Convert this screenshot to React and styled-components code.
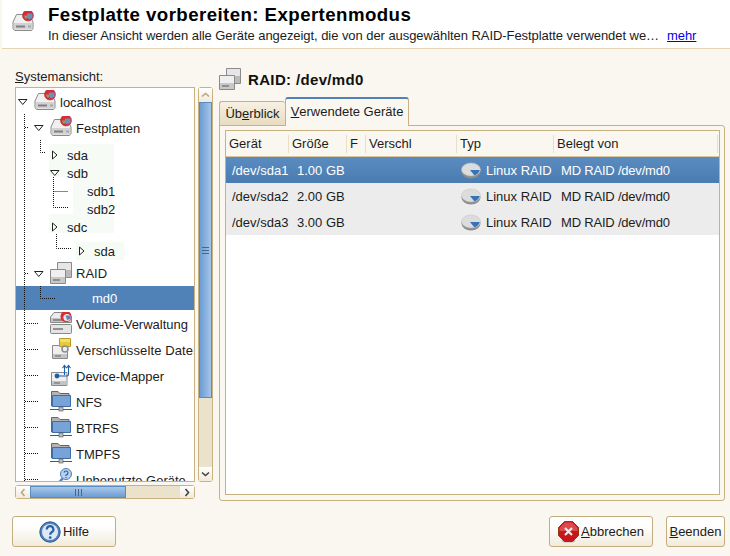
import React from 'react';
import styled, { createGlobalStyle } from 'styled-components';

const GlobalStyle = createGlobalStyle`
  html, body { margin: 0; padding: 0; background: #faf7f0; }
  body { font-family: "Liberation Sans", Arial, sans-serif; font-size: 13px; color: #1c1c1c; }
`;

const Page = styled.div`
  width: 730px;
  height: 556px;
  display: flex;
  flex-direction: column;
  overflow: hidden;
  background: #faf7f0;
`;

const Header = styled.header`
  height: 48px;
  padding-left: 10px;
  display: flex;
  align-items: center;
  gap: 14px;
  background: #fff;
  border-bottom: 1px solid #e6d5b3;
  margin-left: 2px;
`;

const HeaderIcon = styled.div`
  width: 22px;
  height: 22px;
  margin-top: -4px;
`;

const HeaderText = styled.div`
  display: flex;
  flex-direction: column;
  gap: 3px;
  margin-top: -1px;
`;

const Title = styled.h1`
  margin: 0;
  font-family: "Liberation Sans", Arial, sans-serif;
  font-size: 18.67px;
  line-height: 20px;
  letter-spacing: 0.43px;
  font-weight: 700;
  color: #000;
`;

const Subtitle = styled.div`
  display: flex;
  gap: 8px;
  font-size: 13px;
  line-height: 15px;
  letter-spacing: -0.06px;
  white-space: nowrap;
`;

const MoreLink = styled.a`
  color: #0000ee;
  text-decoration: underline;
`;

const Main = styled.main`
  height: 452px;
  padding: 19px 5px 0 15px;
  box-sizing: border-box;
  display: flex;
  gap: 6px;
`;

const LeftColumn = styled.section`
  width: 198px;
  display: flex;
  flex-direction: column;
`;

const TreeLabel = styled.div`
  height: 19px;
  line-height: 18px;
`;

const TreeArea = styled.div`
  height: 395px;
  display: flex;
  gap: 3px;
`;

const Tree = styled.div`
  position: relative;
  width: 180px;
  box-sizing: border-box;
  border: 1px solid #c8b183;
  background: #fff;
  padding-top: 1px;
  overflow: hidden;
`;

const Row = styled.div`
  height: ${p => p.$height || 26}px;
  margin-top: ${p => p.$top || 0}px;
  padding-left: ${p => p.$indent || 0}px;
  display: flex;
  align-items: center;
  white-space: nowrap;
  letter-spacing: ${p => p.$track || 0}px;
  background: ${p => (p.$selected ? '#5082b8' : 'transparent')};
  color: ${p => (p.$selected ? '#fff' : '#1c1c1c')};
`;

const ExpanderSlot = styled.span`
  width: ${p => p.$width || 16}px;
  flex: none;
  display: flex;
  align-items: center;
`;

const RowIcon = styled.span`
  width: 22px;
  height: 22px;
  flex: none;
  margin-right: 4px;
  margin-top: -2px;
`;

const PaleBlock = styled.div`
  width: ${p => p.$width}px;
  height: ${p => p.$height}px;
  margin-top: ${p => p.$top}px;
  margin-left: ${p => p.$left}px;
  padding-top: ${p => p.$pad || 0}px;
  box-sizing: border-box;
  background: #f6fbf6;
`;

const Leaves = styled.div`
  margin-top: -5px;
  padding-top: 5px;
  background: linear-gradient(#fff, #fff) no-repeat 0 0 / 24px 37px;
`;

const SubRow = styled.div`
  height: 18px;
  padding-left: ${p => p.$indent || 1}px;
  display: flex;
  align-items: center;
`;

const TreeLines = styled.svg`
  position: absolute;
  left: 0;
  top: 0;
  pointer-events: none;
`;

const VScroll = styled.div`
  width: 15px;
  box-sizing: border-box;
  border: 1px solid #c8b183;
  border-radius: 3px;
  background: #ebe2cc;
  display: flex;
  flex-direction: column;
  align-items: stretch;
`;

const HScroll = styled.div`
  width: 180px;
  height: 14px;
  margin-top: 3px;
  box-sizing: border-box;
  border: 1px solid #c8b183;
  border-radius: 3px;
  background: #ebe2cc;
  display: flex;
`;

const ScrollButton = styled.div`
  flex: none;
  display: flex;
  align-items: center;
  justify-content: center;
  width: ${p => (p.$horizontal ? '14px' : 'auto')};
  height: ${p => (p.$horizontal ? 'auto' : '14px')};
  background: linear-gradient(#fff, #f1ead9);
`;

const Thumb = styled.div`
  flex: none;
  display: flex;
  align-items: center;
  justify-content: center;
  box-sizing: border-box;
  border: 1px solid #5a8cc4;
  ${p => p.$horizontal
    ? 'width: 96px; background: linear-gradient(#a9c8e8, #6b9dd3);'
    : 'height: 296px; background: linear-gradient(90deg, #6a9cd3, #a6c6e8);'}
`;

const Spacer = styled.div`
  flex: 1;
`;

const RightColumn = styled.section`
  width: 506px;
  display: flex;
  flex-direction: column;
`;

const PanelHeading = styled.div`
  height: 22px;
  display: flex;
  align-items: center;
  gap: 7px;
`;

const HeadingText = styled.h2`
  margin: 0;
  font-family: "Liberation Sans", Arial, sans-serif;
  font-size: 15px;
  letter-spacing: 0.35px;
  font-weight: 700;
  color: #111;
`;

const TabBar = styled.div`
  height: 30px;
  margin-top: 6px;
  display: flex;
  align-items: flex-end;
  position: relative;
  z-index: 1;
  margin-bottom: -1px;
`;

const Tab = styled.div`
  box-sizing: border-box;
  display: flex;
  align-items: center;
  justify-content: center;
  white-space: nowrap;
  border: 1px solid #c8b183;
  border-radius: 3px 3px 0 0;
  ${p => p.$active
    ? `width: 124px; height: 29px; background: #faf7f0; border-top: 2px solid #5082b8; border-bottom: 0; padding-bottom: 2px;`
    : `width: 66px; height: 25px; background: linear-gradient(#f7f1e2, #e8dcc1); border-right: 0;`}
`;

const TabPanel = styled.div`
  flex: 1;
  min-height: 0;
  box-sizing: border-box;
  border: 1px solid #c8b183;
  border-radius: 0 3px 3px 3px;
  padding: 4px 4px 5px 5px;
  display: flex;
`;

const Table = styled.div`
  flex: 1;
  box-sizing: border-box;
  border: 1px solid #c8b183;
  background: #fff;
`;

const columns = '63px 58px 19px 91px 97px 164px';

const HeadRow = styled.div`
  display: grid;
  grid-template-columns: ${columns};
  height: 26px;
  box-sizing: border-box;
  align-items: center;
  background: #faf7f0;
  border-bottom: 1px solid #d9c69c;
`;

const HeadCell = styled.div`
  height: 18px;
  line-height: 18px;
  padding-left: 3px;
  border-right: 1px solid #e8dfca;
  box-sizing: border-box;
  white-space: nowrap;
  overflow: hidden;
`;

const DataRow = styled.div`
  display: grid;
  grid-template-columns: ${columns};
  height: 26px;
  width: 493px;
  align-items: center;
  background: ${p => (p.$selected ? 'linear-gradient(#5a8cc0, #4a7cb2)' : '#ececec')};
  color: ${p => (p.$selected ? '#fff' : '#1c1c1c')};
`;

const DataCell = styled.div`
  padding-left: ${p => p.$pad || 6}px;
  display: flex;
  align-items: center;
  gap: 5px;
  white-space: nowrap;
  letter-spacing: ${p => p.$track || 0}px;
`;

const Footer = styled.footer`
  padding: 15px 5px 0 12px;
  display: flex;
  justify-content: space-between;
`;

const ButtonGroup = styled.div`
  display: flex;
  gap: 13px;
`;

const Button = styled.button`
  height: 31px;
  width: ${p => p.$width}px;
  padding: 0;
  box-sizing: border-box;
  border: 1px solid #c3ad80;
  border-radius: 3px;
  background: linear-gradient(#fff 30%, #f1ebda);
  display: flex;
  align-items: center;
  justify-content: center;
  gap: 2px;
  font-family: "Liberation Sans", Arial, sans-serif;
  font-size: 13px;
  color: #1c1c1c;
`;

const Mnemonic = styled.span`
  text-decoration: underline;
`;

const Expander = ({ open }) => (
  <svg width="10" height="10" viewBox="0 0 10 10">
    {open
      ? <path d="M0.5 2.5H9L4.75 7.5Z" fill="#fff" stroke="#222" />
      : <path d="M2.5 1L7 5L2.5 9Z" fill="#fff" stroke="#222" />}
  </svg>
);

const HardDisk = () => (
  <svg width="22" height="22" viewBox="0 0 22 22">
    <path d="M4.5 3.5H17.5L21 11V17.5L19.5 19.5H2.5L1 17.5V11Z" fill="#f0f0f0" stroke="#8a8a8a" />
    <path d="M2 12H20V18.5H2Z" fill="#d2d2d2" />
    <path d="M4 15.5H13" stroke="#808080" strokeWidth="2" />
    <path d="M16 15.5H19" stroke="#a8a8a8" strokeWidth="2" />
    <circle cx="16" cy="4.5" r="5.5" fill="#dc2a32" stroke="#b23a3a" strokeWidth="0.6" />
    <path d="M15 2.5H20.5V7L17 8.5L15 6.5Z" fill="#6b8fc0" />
    <path d="M12 4.5H15V7.5H13Z" fill="#8aa06a" />
  </svg>
);

const RaidDisk = () => (
  <svg width="22" height="22" viewBox="0 0 22 22">
    <path d="M7.5 0.5H21.5V15.5H7.5Z" fill="#e6e6e6" stroke="#8a8a8a" />
    <path d="M16 8H21V15H16Z" fill="#bbb" />
    <path d="M0.5 7.5H15.5V21.5H0.5Z" fill="#efefef" stroke="#8a8a8a" />
    <path d="M1 15H15V21H1Z" fill="#c8c8c8" />
    <path d="M3 18H10" stroke="#777" strokeWidth="1.4" />
  </svg>
);

const VolumeDisk = () => (
  <svg width="22" height="22" viewBox="0 0 22 22">
    <path d="M4 0.5H18L21.5 5V10.5H0.5V5Z" fill="#ececec" stroke="#888" />
    <path d="M1 6H21V10H1Z" fill="#c6c6c6" />
    <path d="M3 8H13" stroke="#7c7c7c" strokeWidth="1.6" />
    <rect x="0.5" y="12.5" width="21" height="9" rx="1" fill="#e4e4e4" stroke="#888" />
    <path d="M3 17H13" stroke="#7c7c7c" strokeWidth="1.6" />
    <circle cx="16" cy="4.5" r="5.5" fill="#dc2a32" />
    <circle cx="17" cy="5.5" r="3.6" fill="#f2e6e0" />
    <path d="M15.5 3.5H20.5V7L17 8Z" fill="#5f87bd" />
  </svg>
);

const LockedDisk = () => (
  <svg width="22" height="22" viewBox="0 0 22 22">
    <path d="M2.5 7.5H17.5V20.5H2.5Z" fill="#efefef" stroke="#8a8a8a" />
    <path d="M3 16H17V20H3Z" fill="#c4c4c4" />
    <path d="M5 18H11" stroke="#808080" strokeWidth="1.4" />
    <path d="M9.5 0.5H20.5V8.5H9.5Z" fill="#f3dd6e" stroke="#b89b2c" />
    <path d="M10 4H20V8H10Z" fill="#e7c93c" />
    <circle cx="15" cy="11" r="3" fill="none" stroke="#8f8f8f" strokeWidth="1.6" />
  </svg>
);

const MapperDisk = () => (
  <svg width="22" height="22" viewBox="0 0 22 22">
    <path d="M1.5 8.5H17V21.5H1.5Z" fill="#efefef" stroke="#8a8a8a" />
    <path d="M2 17H16.5V21H2Z" fill="#c4c4c4" />
    <path d="M4 19H10" stroke="#808080" strokeWidth="1.4" />
    <circle cx="7" cy="12" r="2.4" fill="#1f5fa8" />
    <path d="M7 12H17C18 12 18.5 11 18.5 10V2M14.5 11V2M12.5 4L14.5 1.5L16.5 4M16.5 4L18.5 1.5L20.5 4" fill="none" stroke="#1f5fa8" strokeWidth="1.1" />
  </svg>
);

const NetFolder = () => (
  <svg width="22" height="22" viewBox="0 0 22 22">
    <path d="M1.5 1.5H8L10 3.5H19V16H1.5Z" fill="#b4b4b4" stroke="#666" />
    <path d="M2.5 5.5H20.5V16.5H2.5Z" fill="#77a3d8" stroke="#3f6ea6" />
    <path d="M0 19.5H22" stroke="#555" />
    <rect x="9" y="17" width="4" height="4" fill="#bbb" stroke="#555" strokeWidth="0.6" />
  </svg>
);

const UnusedDisk = () => (
  <svg width="22" height="22" viewBox="0 0 22 22">
    <path d="M0.5 14.5H12V22H0.5Z" fill="#eee" stroke="#888" />
    <path d="M6 18L13 10" stroke="#5f87bd" strokeWidth="2.6" />
    <circle cx="16" cy="6" r="5.5" fill="#b9d1ee" stroke="#4c7cb6" />
    <path d="M14 4.5A2 2 0 1 1 16 7V8M16 9V10" fill="none" stroke="#2f5f9c" strokeWidth="1.2" />
  </svg>
);

const Disc = () => (
  <svg width="20" height="17" viewBox="0 0 20 17">
    <ellipse cx="10" cy="9.5" rx="9.5" ry="7" fill="#8d8d8d" />
    <ellipse cx="10" cy="7.5" rx="9.5" ry="6.5" fill="#dcdcdc" stroke="#c0c0c0" strokeWidth="0.5" />
    <path d="M9 8H18.8C18 10.5 16.5 12 13.5 13.5Z" fill="#3a72ba" />
  </svg>
);

const HelpIcon = () => (
  <svg width="22" height="22" viewBox="0 0 22 22">
    <circle cx="11" cy="11" r="10.2" fill="#4f82bf" stroke="#2d5a92" />
    <circle cx="11" cy="11" r="8" fill="#dfe9f5" />
    <path d="M7.8 8.4A3.3 3.3 0 1 1 12.6 11.3C11.5 12 11.2 12.5 11.2 13.8" fill="none" stroke="#2b62a6" strokeWidth="2.2" />
    <circle cx="11.2" cy="16.6" r="1.4" fill="#2b62a6" />
  </svg>
);

const CancelIcon = () => (
  <svg width="21" height="22" viewBox="0 0 21 22">
    <ellipse cx="10.5" cy="20" rx="7" ry="1.6" fill="#bbb" />
    <path d="M6.5 0.5H14.5L20.5 6.5V14.5L14.5 20.5H6.5L0.5 14.5V6.5Z" fill="#c8161d" stroke="#931" />
    <path d="M1.5 7L7 1.5H14L19.5 7V10H1.5Z" fill="#dc4a4e" />
    <path d="M7 7L14 14M14 7L7 14" stroke="#f5e8e8" strokeWidth="2.2" />
  </svg>
);

const Chevron = ({ dir, color = '#444' }) => {
  const paths = {
    up: 'M1 5.5L4.5 2.5L8 5.5',
    down: 'M1 2.5L4.5 5.5L8 2.5',
    left: 'M5.5 1L2.5 4.5L5.5 8',
    right: 'M2.5 1L5.5 4.5L2.5 8',
  };
  return (
    <svg width="9" height="9" viewBox="0 0 9 9">
      <path d={paths[dir]} fill="none" stroke={color} strokeWidth="1.6" />
    </svg>
  );
};

const Grip = ({ horizontal }) => (
  <svg width="9" height="9" viewBox="0 0 9 9">
    <path
      d={horizontal ? 'M1.5 1V8M4.5 1V8M7.5 1V8' : 'M1 1.5H8M1 4.5H8M1 7.5H8'}
      stroke="#44678f"
    />
  </svg>
);

const linePaths = [
  'M24.5 115V483',
  'M25 128.5H29',
  'M40.5 141V153.5H45',
  'M53.5 178V208.5H68M53.5 192.5H68',
  'M56.5 235V249.5H71',
  'M25 274.5H29',
  'M40.5 287V299.5H55',
  'M25 324.5H39M25 350.5H39M25 376.5H39M25 402.5H39M25 428.5H39M25 454.5H39M25 480.5H39',
];

const TreeConnectors = () => (
  <TreeLines width="178" height="393" viewBox="16 89 178 393">
    <path d={linePaths.join(' ')} fill="none" stroke="#111" strokeDasharray="1 1" />
  </TreeLines>
);

const plainRows = [
  { label: 'Volume-Verwaltung', icon: <VolumeDisk /> },
  { label: 'Verschlüsselte Dateien', icon: <LockedDisk />, track: 0.12 },
  { label: 'Device-Mapper', icon: <MapperDisk /> },
  { label: 'NFS', icon: <NetFolder /> },
  { label: 'BTRFS', icon: <NetFolder /> },
  { label: 'TMPFS', icon: <NetFolder /> },
  { label: 'Unbenutzte Geräte', icon: <UnusedDisk /> },
];

const devices = [
  { name: '/dev/sda1', size: '1.00 GB', selected: true },
  { name: '/dev/sda2', size: '2.00 GB' },
  { name: '/dev/sda3', size: '3.00 GB' },
];

export default function App() {
  return (
    <Page>
      <GlobalStyle />
      <Header>
        <HeaderIcon><HardDisk /></HeaderIcon>
        <HeaderText>
          <Title>Festplatte vorbereiten: Expertenmodus</Title>
          <Subtitle>
            <span>In dieser Ansicht werden alle Geräte angezeigt, die von der ausgewählten RAID-Festplatte verwendet we…</span>
            <MoreLink>mehr</MoreLink>
          </Subtitle>
        </HeaderText>
      </Header>

      <Main>
        <LeftColumn>
          <TreeLabel><Mnemonic>S</Mnemonic>ystemansicht:</TreeLabel>
          <TreeArea>
            <Tree>
              <Row $indent={2}>
                <ExpanderSlot><Expander open /></ExpanderSlot>
                <RowIcon><HardDisk /></RowIcon>
                localhost
              </Row>
              <Row $indent={18}>
                <ExpanderSlot><Expander open /></ExpanderSlot>
                <RowIcon><HardDisk /></RowIcon>
                Festplatten
              </Row>
              <PaleBlock $width={65} $height={89} $top={3} $left={33} $pad={2}>
                <SubRow>
                  <ExpanderSlot $width={17}><Expander /></ExpanderSlot>sda
                </SubRow>
                <SubRow>
                  <ExpanderSlot $width={17}><Expander open /></ExpanderSlot>sdb
                </SubRow>
                <Leaves>
                  <SubRow $indent={38}>sdb1</SubRow>
                  <SubRow $indent={38}>sdb2</SubRow>
                </Leaves>
                <SubRow>
                  <ExpanderSlot $width={17}><Expander /></ExpanderSlot>sdc
                </SubRow>
              </PaleBlock>
              <PaleBlock $width={48} $height={18} $top={9} $left={60}>
                <SubRow>
                  <ExpanderSlot $width={17}><Expander /></ExpanderSlot>sda
                </SubRow>
              </PaleBlock>
              <Row $indent={18} $height={25} $top={1}>
                <ExpanderSlot><Expander open /></ExpanderSlot>
                <RowIcon><RaidDisk /></RowIcon>
                RAID
              </Row>
              <Row $indent={76} $height={24} $selected>md0</Row>
              {plainRows.map((row, i) => (
                <Row key={row.label} $indent={34} $top={i === 0 ? 1 : 0} $track={row.track}>
                  <RowIcon>{row.icon}</RowIcon>
                  {row.label}
                </Row>
              ))}
              <TreeConnectors />
            </Tree>
            <VScroll>
              <ScrollButton><Chevron dir="up" color="#b9a67c" /></ScrollButton>
              <Thumb><Grip /></Thumb>
              <Spacer />
              <ScrollButton><Chevron dir="down" /></ScrollButton>
            </VScroll>
          </TreeArea>
          <HScroll>
            <ScrollButton $horizontal><Chevron dir="left" color="#b9a67c" /></ScrollButton>
            <Thumb $horizontal><Grip horizontal /></Thumb>
            <Spacer />
            <ScrollButton $horizontal><Chevron dir="right" /></ScrollButton>
          </HScroll>
        </LeftColumn>

        <RightColumn>
          <PanelHeading>
            <RaidDisk />
            <HeadingText>RAID: /dev/md0</HeadingText>
          </PanelHeading>
          <TabBar>
            <Tab>Üb<Mnemonic>e</Mnemonic>rblick</Tab>
            <Tab $active><Mnemonic>V</Mnemonic>erwendete Geräte</Tab>
          </TabBar>
          <TabPanel>
            <Table>
              <HeadRow>
                <HeadCell>Gerät</HeadCell>
                <HeadCell>Größe</HeadCell>
                <HeadCell>F</HeadCell>
                <HeadCell>Verschl</HeadCell>
                <HeadCell>Typ</HeadCell>
                <HeadCell>Belegt von</HeadCell>
              </HeadRow>
              {devices.map(d => (
                <DataRow key={d.name} $selected={d.selected}>
                  <DataCell>{d.name}</DataCell>
                  <DataCell $pad={8}>{d.size}</DataCell>
                  <DataCell />
                  <DataCell />
                  <DataCell $pad={4}><Disc />Linux RAID</DataCell>
                  <DataCell $pad={7} $track={-0.2}>MD RAID /dev/md0</DataCell>
                </DataRow>
              ))}
            </Table>
          </TabPanel>
        </RightColumn>
      </Main>

      <Footer>
        <Button $width={104}><HelpIcon />Hilfe</Button>
        <ButtonGroup>
          <Button $width={104}><CancelIcon /><span><Mnemonic>A</Mnemonic>bbrechen</span></Button>
          <Button $width={59}><span><Mnemonic>B</Mnemonic>eenden</span></Button>
        </ButtonGroup>
      </Footer>
    </Page>
  );
}
